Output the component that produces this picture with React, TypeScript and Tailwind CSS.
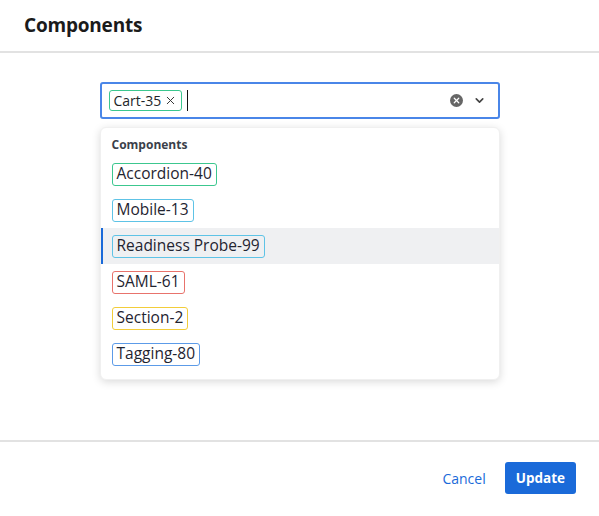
import React from "react";
import { X, ChevronDown } from "lucide-react";

const options = [
  { label: "Accordion-40", color: "border-[#3cc78f]" },
  { label: "Mobile-13", color: "border-[#5ec3e6]" },
  { label: "Readiness Probe-99", color: "border-[#5ec3e6]", active: true },
  { label: "SAML-61", color: "border-[#e8736c]" },
  { label: "Section-2", color: "border-[#f2cd3a]" },
  { label: "Tagging-80", color: "border-[#5c9be8]" },
];

export default function App() {
  return (
    <div className="w-[599px] h-[516px] bg-white flex flex-col text-[#212529]" style={{ fontFamily: '"Open Sans", "Noto Sans", sans-serif' }}>
      <div className="h-[53px] border-b-2 border-[#e2e2e2] flex items-center px-6">
        <h1 className="text-[19px] font-bold text-[#1b1b1b] tracking-[-0.2px]">Components</h1>
      </div>
      <div className="flex-1 flex flex-col items-center pt-[29px]">
        <div className="w-[400px] h-[37px] border-2 border-[#4a86e8] rounded-[3px] flex items-center pl-[7px] pr-[12px]">
          <span className="flex items-center gap-[3px] h-[21px] border border-[#3cc78f] rounded-[3px] px-[4px] text-[14px] leading-none">
            Cart-35
            <X size={13} strokeWidth={1.8} className="text-[#333]" />
          </span>
          <span className="ml-[5px] w-px h-[21px] bg-[#111]" />
          <span className="flex-1" />
          <span className="w-[13px] h-[13px] rounded-full bg-[#666] flex items-center justify-center">
            <X size={9} strokeWidth={3.2} className="text-white" />
          </span>
          <ChevronDown size={13} strokeWidth={3} className="ml-[10px] text-[#444]" />
        </div>
        <div className="mt-[8px] w-[400px] rounded-[6px] bg-white shadow-[0_2px_8px_rgba(0,0,0,0.15)] border border-[#f0f0f0] pt-[8px] pb-[7px]">
          <div className="px-[11px] text-[12px] font-bold text-[#3b3f4a] mb-[2px]">Components</div>
          {options.map((o) => (
            <div
              key={o.label}
              className={`h-[36px] flex items-center pl-[9px] border-l-2 ${o.active ? "bg-[#eff0f2] border-[#1a6ad9]" : "border-transparent"}`}
            >
              <span className={`border ${o.color} rounded-[3px] h-[23px] px-[4px] flex items-center text-[15.5px] text-[#1f2430]`}>
                {o.label}
              </span>
            </div>
          ))}
        </div>
      </div>
      <div className="h-[76px] border-t-2 border-[#e2e2e2] flex items-start justify-end gap-[19px] pr-[23px] pt-[20px]">
        <button className="h-[32px] text-[14px] text-[#1a6ad9] px-[0px]">Cancel</button>
        <button className="h-[32px] px-[11px] rounded-[3px] bg-[#1a6ad9] text-white text-[13.5px] font-bold">Update</button>
      </div>
    </div>
  );
}
